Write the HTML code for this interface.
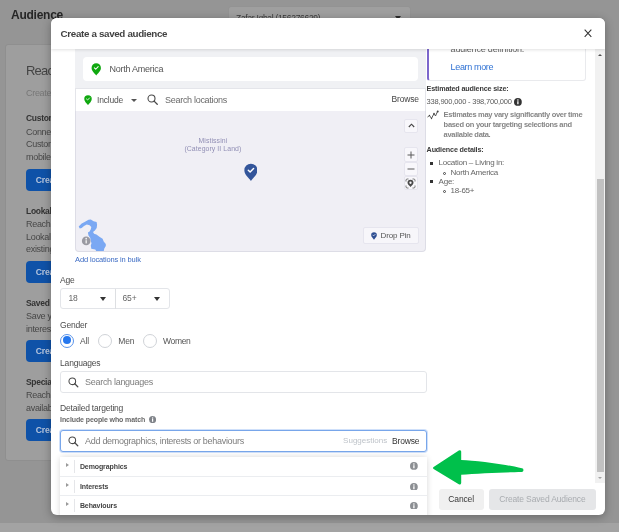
<!DOCTYPE html>
<html lang="en">
<head>
<meta charset="utf-8">
<title>Create a saved audience</title>
<style>
*{box-sizing:border-box;margin:0;padding:0}
html,body{width:619px;height:532px;overflow:hidden}
html{background:#959595}
body{position:relative;background:#959595;filter:blur(0.38px);font-family:"Liberation Sans",Arial,sans-serif;color:#1c1e21;font-size:8.5px;letter-spacing:-0.2px}
.abs{position:absolute;white-space:nowrap}
/* ---------- dimmed background page ---------- */
#bgcard{left:5px;top:44px;width:597px;height:416.5px;background:#9e9e9e;border-radius:3px;border:1px solid #8f8f8f}
#strip{left:0;top:523px;width:619px;height:9px;background:#a3a3a3}
#ttl{left:11px;top:7.8px;font-size:12px;font-weight:bold;color:#262626;line-height:14px;letter-spacing:-0.25px}
#acct{left:228px;top:6px;width:183px;height:24px;background:#9f9f9f;border-radius:3px;border:1px solid #939393}
#acct span{position:absolute;left:7px;top:6px;font-size:8.5px;color:#3a3a3a;line-height:10px;letter-spacing:-0.3px}
#acct i{position:absolute;left:166px;top:9px;border:3.5px solid transparent;border-top:4px solid #2a2a2a;width:0;height:0}
.bh{font-size:13px;color:#444;line-height:16px;letter-spacing:-0.8px}
.bs{font-size:9px;color:#777;line-height:11px;letter-spacing:-0.3px}
.bb{font-size:8.5px;font-weight:bold;color:#333;line-height:11px;letter-spacing:-0.3px}
.bt{font-size:9px;color:#474747;line-height:11px;letter-spacing:-0.3px}
.bbtn{left:25.5px;width:60px;height:22px;background:#0f52a8;border-radius:4px;color:#b7c6de;font-size:8.600px;font-weight:bold;line-height:22px;padding-left:10.3px}
/* ---------- modal ---------- */
#modal{left:50.6px;top:18px;width:554.6px;height:497px;background:#fff;border-radius:6px;overflow:hidden;box-shadow:0 2px 10px rgba(0,0,0,.3)}
#hdr{left:0;top:0;width:554px;height:31px;background:#fff;box-shadow:0 1px 3px rgba(0,0,0,.12);z-index:5}
#hdr b{position:absolute;left:10px;top:8.700px;font-size:9.8px;line-height:13px;color:#424242;letter-spacing:-0.34px}
#x{left:533.3px;top:11px;width:8px;height:8.5px}
/* left column */
#locbox{left:24.5px;top:31px;width:350.5px;height:202px;background:#f0f1f4;border-radius:0 0 4px 4px}
#na{left:32px;top:39px;width:335px;height:24.2px;background:#fff;border-radius:4px}
#na span{position:absolute;left:27px;top:7.2px;font-size:9px;line-height:11px;color:#555;letter-spacing:-0.25px}
#incrow{left:24.5px;top:69.5px;width:350.5px;height:23.5px;background:#fff;border:1px solid #e4e5ea;border-bottom:none}
#map{left:24.5px;top:93px;width:350.5px;height:141px;background:#f0eff5;border:1px solid #dddde6;border-top:none;border-radius:0 0 4px 4px;overflow:hidden}
.t9{font-size:8.5px;line-height:11px;color:#555}
.lbl{font-size:8.5px;line-height:11px;color:#4c4c4c}
.mapbtn{background:#f8f7fb;border:1px solid #e6e5ee;border-radius:2px}
.inp{background:#fff;border:1px solid #e3e5e9;border-radius:3px}
.radio{width:14px;height:14px;border-radius:50%;border:1px solid #d0d3d8;background:#fff}
.caret{width:0;height:0;border:3.8px solid transparent;border-top:4.2px solid #333;border-bottom:none}
.row{left:9px;width:367px;height:19.5px;border-top:1px solid #ebedf0;background:#fff}
.row b{position:absolute;left:20.3px;top:5px;font-size:7px;line-height:9px;color:#444;letter-spacing:-0.1px}
.row i.tri{position:absolute;left:6.3px;top:6px;width:0;height:0;border:2.8px solid transparent;border-left:3.4px solid #9a9a9a;border-right:none}
.row i.vl{position:absolute;left:14px;top:3px;width:1px;height:13px;background:#e5e6e9}
.row svg{position:absolute;left:350.3px;top:5.5px}
.rt{font-size:7.5px;line-height:9px;color:#858585;font-weight:bold;letter-spacing:-0.3px}
.rd{font-size:8px;line-height:10px;color:#666;letter-spacing:-0.25px}
.ph{font-size:9px;line-height:12px;color:#7d7d7d;letter-spacing:-0.3px}
</style>
</head>
<body>
<!-- background page -->
<div class="abs" id="ttl">Audience</div>
<div class="abs" id="acct"><span>Zafar Iqbal (156276629)</span><i></i></div>
<div class="abs" id="bgcard"></div>
<div class="abs" id="strip"></div>
<div class="abs bh" style="left:26px;top:62.8px">Reach the people who matter to you</div>
<div class="abs bs" style="left:26px;top:87.5px">Create and save audiences to reach the people</div>
<div class="abs bb" style="left:26px;top:113.3px">Custom Audiences</div>
<div class="abs bt" style="left:26px;top:126.5px">Connect with people</div>
<div class="abs bt" style="left:26px;top:139px">Custom Audiences from</div>
<div class="abs bt" style="left:26px;top:152px">mobile app.</div>
<div class="abs bb" style="left:26px;top:205.5px">Lookalike Audiences</div>
<div class="abs bt" style="left:26px;top:219px">Reach new people</div>
<div class="abs bt" style="left:26px;top:231.5px">Lookalike Audience</div>
<div class="abs bt" style="left:26px;top:244px">existing customers.</div>
<div class="abs bb" style="left:26px;top:297.5px">Saved Audience</div>
<div class="abs bt" style="left:26px;top:310.5px">Save your commonly</div>
<div class="abs bt" style="left:26px;top:324px">interests and behaviours</div>
<div class="abs bb" style="left:26px;top:377px">Special Ad Audience</div>
<div class="abs bt" style="left:26px;top:389.5px">Reach new people</div>
<div class="abs bt" style="left:26px;top:403px">available for ads</div>
<div class="abs bbtn" style="top:169px">Create a Custom Audience</div>
<div class="abs bbtn" style="top:261px">Create a Lookalike Audience</div>
<div class="abs bbtn" style="top:340px">Create a Saved Audience</div>
<div class="abs bbtn" style="top:419.4px">Create a Special Ad Audience</div>
<!-- modal -->

<div class="abs" id="modal">
  <!-- location block -->
  <div class="abs" id="locbox"></div>
  <div class="abs" id="na"><div class="abs" style="left:8.2px;top:5.9px"><svg width="10.5" height="12.8" viewBox="0 0 20 26"><path d="M10 25.5 C7.5 21.5 0.5 16.5 0.5 10 A9.5 9.5 0 0 1 19.5 10 C19.5 16.5 12.5 21.5 10 25.5Z" fill="#10a810"/><path d="M6.2 10 L8.9 12.7 L13.9 7.4" fill="none" stroke="#fff" stroke-width="2.1" stroke-linecap="round" stroke-linejoin="round"/></svg></div><span>North America</span></div>
  <div class="abs" id="incrow">
    <div class="abs" style="left:7.7px;top:6.6px"><svg width="8" height="10.3" viewBox="0 0 20 26"><path d="M10 25.5 C7.5 21.5 0.5 16.5 0.5 10 A9.5 9.5 0 0 1 19.5 10 C19.5 16.5 12.5 21.5 10 25.5Z" fill="#10a810"/><path d="M6.2 10 L8.9 12.7 L13.9 7.4" fill="none" stroke="#fff" stroke-width="2.1" stroke-linecap="round" stroke-linejoin="round"/></svg></div>
    <div class="abs t9" style="left:21px;top:6px">Include</div>
    <div class="abs caret" style="left:55px;top:10px;border-width:3px;border-top:3.5px solid #555;border-bottom:none"></div>
    <div class="abs" style="left:71px;top:5.5px"><svg width="11" height="11" viewBox="0 0 22 22"><circle cx="9" cy="9" r="7" fill="none" stroke="#4a4a4a" stroke-width="2.2"/><path d="M14.2 14.2 L20.5 20.5" stroke="#4a4a4a" stroke-width="2.6" stroke-linecap="round"/></svg></div>
    <div class="abs ph" style="left:89px;top:5px;color:#6a6a6a">Search locations</div>
    <div class="abs t9" style="left:315.5px;top:5.5px;color:#444">Browse</div>
  </div>
  <div class="abs" id="map">
    <div class="abs" style="left:76.8px;top:26.2px;width:120px;text-align:center;font-size:6.9px;line-height:8.3px;color:#918fb5;white-space:normal;letter-spacing:0.08px">Mistissini<br>(Category II Land)</div>
    <div class="abs" style="left:167.6px;top:51.6px"><svg width="13.8" height="18.6" viewBox="0 0 20 26"><path d="M10 25.5 C7.5 21.5 0.5 16.5 0.5 10 A9.5 9.5 0 0 1 19.5 10 C19.5 16.5 12.5 21.5 10 25.5Z" fill="#33559a"/><path d="M6.2 10 L8.9 12.7 L13.9 7.4" fill="none" stroke="#fff" stroke-width="2.1" stroke-linecap="round" stroke-linejoin="round"/></svg></div>
    <div class="abs mapbtn" style="left:327.5px;top:7.5px;width:14.5px;height:14px"><svg class="abs" style="left:3px;top:3.5px" width="7" height="5" viewBox="0 0 7 5"><path d="M0.8 4 L3.5 1.2 L6.2 4" fill="none" stroke="#444" stroke-width="1.1"/></svg></div>
    <div class="abs mapbtn" style="left:327.5px;top:36.3px;width:14.5px;height:14.7px"></div>
    <div class="abs mapbtn" style="left:327.5px;top:51px;width:14.5px;height:14.2px"></div>
    <div class="abs mapbtn" style="left:327.5px;top:65.200px;width:14.5px;height:14px"></div>
    <svg class="abs" style="left:330.7px;top:39.8px" width="8" height="8" viewBox="0 0 8 8"><path d="M4 0.5V7.5M0.5 4H7.5" stroke="#5a5a5a" stroke-width="1"/></svg>
    <svg class="abs" style="left:330.7px;top:54.1px" width="8" height="8" viewBox="0 0 8 8"><path d="M0.5 4H7.5" stroke="#5a5a5a" stroke-width="1"/></svg>
    <svg class="abs" style="left:329.2px;top:66.7px" width="11" height="11" viewBox="0 0 22 22"><path d="M2 7V4.500a2.500 2.500 0 0 1 2.500-2.500h2.500M15 2h2.500a2.500 2.500 0 0 1 2.500 2.500v2.500M20 15v2.500a2.500 2.500 0 0 1-2.500 2.500h-2.500M7 20H4.500a2.500 2.500 0 0 1-2.500-2.500v-2.500" fill="none" stroke="#666" stroke-width="1.800"/><path d="M11 18 C9 15 5 13 5 9.500 A6 6 0 0 1 17 9.500 C17 13 13 15 11 18Z" fill="#4a4a4a"/><circle cx="11" cy="9.500" r="2.300" fill="#f8f7fb"/></svg>
    <div class="abs mapbtn" style="left:286.5px;top:115.5px;width:56px;height:17px;background:#f7f6fa"><div class="abs" style="left:7px;top:4.5px"><svg width="6" height="8" viewBox="0 0 20 26"><path d="M10 25.5 C7.5 21.5 0.5 16.5 0.5 10 A9.5 9.5 0 0 1 19.5 10 C19.5 16.5 12.5 21.5 10 25.5Z" fill="#2f4f93"/><path d="M6.2 10 L8.9 12.7 L13.9 7.4" fill="none" stroke="#fff" stroke-width="2.1" stroke-linecap="round" stroke-linejoin="round"/></svg></div><span class="abs" style="left:17px;top:2.5px;font-size:8px;line-height:11px;color:#555;letter-spacing:-0.15px">Drop Pin</span></div>
    <svg class="abs" style="left:0;top:104px" width="36" height="36" viewBox="76.1 215 36 36"><path d="M78.8,226.6 L81.8,223.6 L84.7,221.9 L88.6,219.7 L90.9,219.4 L93.7,221.3 L96.7,221.9 L97.2,224.7 L96.8,228.1 L95.0,230.4 L93.1,232.1 L94.2,233.7 L96.5,234.5 L99.9,237.1 L102.7,238.8 L103.8,241.6 L105.9,243.9 L105.9,246.1 L104.4,248.4 L103.8,251.4 L96.5,251.4 L95.4,249.5 L91.4,248.7 L90.9,245.6 L91.6,243.3 L90.9,241.1 L90.3,237.7 L88.6,235.4 L88.0,232.6 L89.7,231.5 L90.9,229.2 L91.4,227.0 L89.7,225.3 L86.9,224.4 L84.1,225.9 L81.8,228.1 L79.9,228.4 Z" fill="#7aa8f3"/><circle cx="86.3" cy="240.9" r="4.3" fill="#9a9aa2"/><rect x="85.6" y="240.2" width="1.4" height="3.2" fill="#eee"/><circle cx="86.3" cy="238.700" r="0.9" fill="#eee"/></svg>
  </div>
  <div class="abs" style="left:24.5px;top:237px;font-size:7.5px;line-height:10px;color:#3d6cc4;letter-spacing:-0.15px">Add locations in bulk</div>

  <div class="abs lbl" style="left:9.5px;top:257px">Age</div>
  <div class="abs inp" style="left:9px;top:269.5px;width:110px;height:21.5px">
    <div class="abs" style="left:54.5px;top:0;width:1px;height:20px;background:#dddfe2"></div>
    <div class="abs t9" style="left:8px;top:4.5px;color:#666">18</div>
    <div class="abs caret" style="left:39px;top:8.5px"></div>
    <div class="abs t9" style="left:62px;top:4.5px;color:#666">65+</div>
    <div class="abs caret" style="left:93.5px;top:8.5px"></div>
  </div>
  <div class="abs lbl" style="left:9.5px;top:301.5px">Gender</div>
  <div class="abs radio" style="left:9.7px;top:315.5px;border:1.2px solid #5b94ea"><div class="abs" style="left:1.800px;top:1.800px;width:8px;height:8px;border-radius:50%;background:#2577ee"></div></div>
  <div class="abs t9" style="left:29.5px;top:317.5px">All</div>
  <div class="abs radio" style="left:47px;top:315.5px"></div>
  <div class="abs t9" style="left:67.7px;top:317.5px">Men</div>
  <div class="abs radio" style="left:92px;top:315.5px"></div>
  <div class="abs t9" style="left:112.5px;top:317.5px;letter-spacing:-0.35px">Women</div>
  <div class="abs lbl" style="left:9.5px;top:339.5px">Languages</div>
  <div class="abs inp" style="left:9px;top:353px;width:367px;height:21.5px">
    <div class="abs" style="left:7.5px;top:5px"><svg width="10.5" height="10.5" viewBox="0 0 22 22"><circle cx="9" cy="9" r="7" fill="none" stroke="#4a4a4a" stroke-width="2.2"/><path d="M14.2 14.2 L20.5 20.5" stroke="#4a4a4a" stroke-width="2.6" stroke-linecap="round"/></svg></div>
    <div class="abs ph" style="left:24.5px;top:4px">Search languages</div>
  </div>
  <div class="abs lbl" style="left:9.5px;top:384.5px">Detailed targeting</div>
  <div class="abs" style="left:9.5px;top:397px;font-size:7px;line-height:9px;font-weight:bold;color:#686868;letter-spacing:-0.1px">Include people who match</div>
  <div class="abs" style="left:98.4px;top:397.4px"><svg width="7.2" height="7.2" viewBox="0 0 12 12"><circle cx="6" cy="6" r="6" fill="#80848a"/><rect x="5" y="5" width="2" height="4.6" fill="#fff"/><circle cx="6" cy="3.2" r="1.2" fill="#fff"/></svg></div>
  <div class="abs inp" style="left:9px;top:412px;width:367px;height:22px;border-color:#78a6ea;box-shadow:0 0 0 1px #cfe0fa">
    <div class="abs" style="left:7.5px;top:5px"><svg width="10.5" height="10.5" viewBox="0 0 22 22"><circle cx="9" cy="9" r="7" fill="none" stroke="#4a4a4a" stroke-width="2.2"/><path d="M14.2 14.2 L20.5 20.5" stroke="#4a4a4a" stroke-width="2.6" stroke-linecap="round"/></svg></div>
    <div class="abs ph" style="left:24.5px;top:4px">Add demographics, interests or behaviours</div>
    <div class="abs" style="left:282.5px;top:5px;font-size:8px;line-height:10px;color:#bec3c9;letter-spacing:0">Suggestions</div>
    <div class="abs t9" style="left:331.5px;top:4.5px;color:#333">Browse</div>
  </div>
  <div class="abs" style="left:9px;top:439px;width:367px;height:70px;background:#fff;border-radius:4px;box-shadow:0 0 6px rgba(0,0,0,.16)"></div>
  <div class="abs row" style="top:438.5px;border-top:none;height:19.5px"><i class="tri"></i><i class="vl"></i><b>Demographics</b><svg width="7.8" height="7.8" viewBox="0 0 12 12"><circle cx="6" cy="6" r="6" fill="#8c8f93"/><rect x="5" y="5" width="2" height="4.6" fill="#fff"/><circle cx="6" cy="3.2" r="1.2" fill="#fff"/></svg></div>
  <div class="abs row" style="top:458px"><i class="tri"></i><i class="vl"></i><b>Interests</b><svg width="7.8" height="7.8" viewBox="0 0 12 12"><circle cx="6" cy="6" r="6" fill="#8c8f93"/><rect x="5" y="5" width="2" height="4.6" fill="#fff"/><circle cx="6" cy="3.2" r="1.2" fill="#fff"/></svg></div>
  <div class="abs row" style="top:477px"><i class="tri"></i><i class="vl"></i><b>Behaviours</b><svg width="7.8" height="7.8" viewBox="0 0 12 12"><circle cx="6" cy="6" r="6" fill="#8c8f93"/><rect x="5" y="5" width="2" height="4.6" fill="#fff"/><circle cx="6" cy="3.2" r="1.2" fill="#fff"/></svg></div>

  <!-- right column -->
  <div class="abs" style="left:376px;top:20px;width:159px;height:42.5px;border:1px solid #e9eaed;border-left:2.5px solid #7c66cc;border-radius:3px;background:#fff"></div>
  <div class="abs" style="left:400px;top:26.4px;font-size:9px;line-height:11px;color:#666">audience definition.</div>
  <div class="abs" style="left:400px;top:43.6px;font-size:9px;line-height:11px;color:#3173d4;letter-spacing:-0.35px">Learn more</div>
  <div class="abs" style="left:376px;top:66px;font-size:7.2px;line-height:9px;font-weight:bold;color:#3a3a3a;letter-spacing:-0.15px">Estimated audience size:</div>
  <div class="abs" style="left:376px;top:78.5px;font-size:7.5px;line-height:10px;color:#5a5a5a;letter-spacing:-0.2px">338,900,000 - 398,700,000</div>
  <div class="abs" style="left:463.3px;top:80.2px"><svg width="7.8" height="7.8" viewBox="0 0 12 12"><circle cx="6" cy="6" r="6" fill="#333"/><rect x="5" y="5" width="2" height="4.6" fill="#fff"/><circle cx="6" cy="3.2" r="1.2" fill="#fff"/></svg></div>
  <svg class="abs" style="left:376px;top:92px" width="12" height="10" viewBox="0 0 12 10"><path d="M0.5 7 L2.5 5.5 L4.5 8.5 L7 3.5 L8.5 6 L10.5 1.5" fill="none" stroke="#444" stroke-width="0.9"/><circle cx="10.7" cy="1.4" r="1" fill="#444"/><circle cx="2.5" cy="5.5" r="0.7" fill="#444"/><circle cx="4.500" cy="8.5" r="0.7" fill="#444"/><circle cx="7" cy="3.5" r="0.7" fill="#444"/></svg>
  <div class="abs rt" style="left:393px;top:91.5px;line-height:10px;white-space:normal;width:170px">Estimates may vary significantly over time<br>based on your targeting selections and<br>available data.</div>
  <div class="abs" style="left:376px;top:127px;font-size:7.2px;line-height:9px;font-weight:bold;color:#3a3a3a;letter-spacing:-0.15px">Audience details:</div>
  <div class="abs" style="left:379.6px;top:144.2px;width:2.6px;height:2.6px;background:#333"></div>
  <div class="abs rd" style="left:388px;top:140px">Location &#8211; Living in:</div>
  <div class="abs" style="left:392px;top:153.5px;width:3px;height:3px;border:0.8px solid #444;border-radius:50%"></div>
  <div class="abs rd" style="left:400px;top:149.5px">North America</div>
  <div class="abs" style="left:379.6px;top:162.2px;width:2.6px;height:2.6px;background:#333"></div>
  <div class="abs rd" style="left:388px;top:158.5px">Age:</div>
  <div class="abs" style="left:392px;top:172px;width:3px;height:3px;border:0.8px solid #444;border-radius:50%"></div>
  <div class="abs rd" style="left:400px;top:168px">18-65+</div>

  <!-- scrollbar -->
  <div class="abs" style="left:544.8px;top:31px;width:9.8px;height:434px;background:#f1f1f1"></div>
  <div class="abs" style="left:546px;top:161px;width:7px;height:293.3px;background:#c1c1c1"></div>
  <div class="abs" style="left:547.5px;top:36px;width:0;height:0;border:2px solid transparent;border-bottom:2.5px solid #505050;border-top:none"></div>
  <div class="abs" style="left:547.5px;top:458.5px;width:0;height:0;border:2px solid transparent;border-top:2.5px solid #a3a3a3;border-bottom:none"></div>

  <!-- green arrow -->
  <svg class="abs" style="left:380px;top:430px" width="96" height="40" viewBox="0 0 96 40"><path d="M2.600 19 L27.800 2.400 Q29.800 1.500 30.200 3.600 L30.200 12 C45 12.400 75 16.300 91 20.300 A1.850 1.850 0 0 1 90.800 23.950 C75 24.200 45 25.500 30.200 26.700 L30.200 35 Q29.800 37.300 27.800 36.200 L2.600 21 Q1.400 20 2.600 19 Z" fill="#00c04b"/></svg>

  <!-- footer buttons -->
  <div class="abs" style="left:388px;top:470.5px;width:45px;height:21px;background:#f0f0f0;border-radius:3px;text-align:center;font-size:8.5px;line-height:21px;color:#3a3a3a;letter-spacing:-0.15px">Cancel</div>
  <div class="abs" style="left:438.5px;top:470.5px;width:106.6px;height:21px;background:#e5e6e8;border-radius:3px;text-align:center;font-size:8.5px;line-height:21px;color:#a9acb0;letter-spacing:-0.15px">Create Saved Audience</div>

  <div class="abs" id="hdr"><b>Create a saved audience</b><svg class="abs" id="x" viewBox="0 0 12 12" preserveAspectRatio="none"><path d="M1 1 L11 11 M11 1 L1 11" stroke="#333" stroke-width="1.6" fill="none"/></svg></div>
</div>
</body>
</html>
